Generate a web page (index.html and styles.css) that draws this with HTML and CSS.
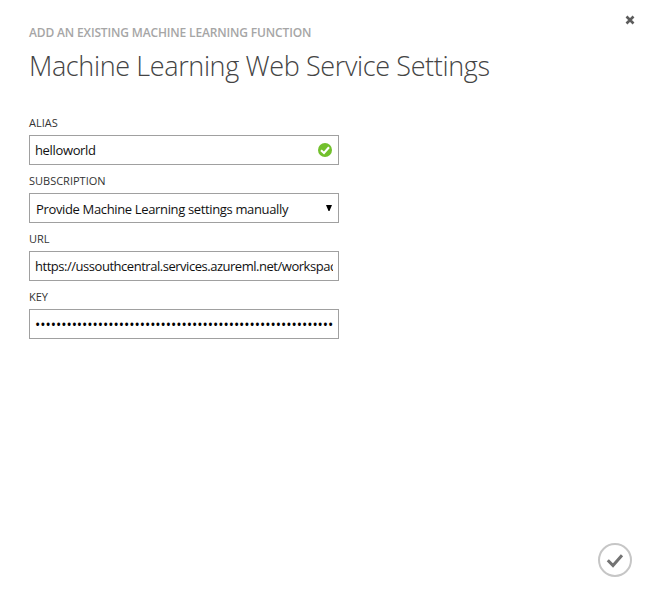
FILE: index.html
```html
<!DOCTYPE html>
<html lang="en">
<head>
<meta charset="utf-8">
<title>Machine Learning Web Service Settings</title>
<link rel="stylesheet" href="styles.css">
</head>
<body>
<main class="dialog">
  <header class="header">
    <div>
      <p class="eyebrow">ADD AN EXISTING MACHINE LEARNING FUNCTION</p>
      <h1 class="title">Machine Learning Web Service Settings</h1>
    </div>
    <button class="close" aria-label="Close">
      <svg width="10" height="10" viewBox="0 0 10 10"><path d="M1.5 1.5 8.5 8.5M8.5 1.5 1.5 8.5" fill="none" stroke="#5c5c5c" stroke-width="2.6"/></svg>
    </button>
  </header>
  <form class="form">
    <label class="label" for="alias">ALIAS</label>
    <div class="field">
      <input class="input alias" id="alias" type="text" value="helloworld">
      <svg class="valid" width="14" height="14" viewBox="0 0 14 14"><circle cx="7" cy="7" r="7" fill="#72c02c"/><path d="M3 7.2 6 10 11 4.3" fill="none" stroke="#fff" stroke-width="2.1"/></svg>
    </div>
    <label class="label" for="subscription">SUBSCRIPTION</label>
    <div class="field select" id="subscription">
      <span class="choice">Provide Machine Learning settings manually</span>
      <svg class="arrow" width="6" height="6" viewBox="0 0 6 6"><path d="M0 0H6L3.5 6H2.5Z" fill="#000"/></svg>
    </div>
    <label class="label" for="url">URL</label>
    <div class="field">
      <input class="input url" id="url" type="text" value="https://ussouthcentral.services.azureml.net/workspaces">
    </div>
    <label class="label" for="key">KEY</label>
    <div class="field">
      <div class="input key" id="key">•••••••••••••••••••••••••••••••••••••••••••••••••••••••••</div>
    </div>
  </form>
  <footer class="footer">
    <button class="confirm" aria-label="Confirm">
      <svg width="34" height="34" viewBox="0 0 34 34"><circle cx="17" cy="17" r="16" fill="#fff" stroke="#c6c6c6" stroke-width="2"/><path d="M9.8 17.2 15 22.5 24 12.2" fill="none" stroke="#737373" stroke-width="3"/></svg>
    </button>
  </footer>
</main>
</body>
</html>
```
FILE: styles.css
```css
* { box-sizing: border-box; }
body {
  margin: 0;
  background: #fff;
  font-family: "Open Sans", "Noto Sans", sans-serif;
}
.dialog {
  display: flex;
  flex-direction: column;
  height: 597px;
  padding: 15px 14px 20px 29px;
}
.header {
  display: flex;
  justify-content: space-between;
  align-items: flex-start;
  height: 100px;
}
.eyebrow {
  margin: 10px 0 0;
  font-size: 12px;
  line-height: 16px;
  font-weight: 600;
  letter-spacing: -0.15px;
  color: #a6a6a6;
}
.title {
  margin: 7px 0 0;
  font-size: 27px;
  line-height: 36px;
  font-weight: 300;
  letter-spacing: -0.37px;
  color: #444;
  white-space: nowrap;
}
.close, .confirm {
  display: flex;
  padding: 0;
  border: 0;
  background: none;
}
.form { width: 310px; }
.label {
  display: block;
  height: 20px;
  font-size: 11px;
  line-height: 16px;
  color: #333;
}
.field {
  display: flex;
  align-items: center;
  height: 30px;
  margin-bottom: 8px;
  padding: 0 5px;
  border: 1px solid #a0a0a0;
  font-size: 13px;
}
.input {
  flex: 1;
  min-width: 0;
  height: 28px;
  padding: 0;
  border: 0;
  outline: 0;
  background: none;
  font: inherit;
  line-height: 28px;
  color: #111;
  letter-spacing: -0.35px;
}
.url { letter-spacing: -0.47px; }
.valid { margin-right: 1px; }
.select { justify-content: space-between; padding: 2px 6px 0; }
.choice { color: #111; letter-spacing: -0.35px; white-space: nowrap; }
.arrow { margin-top: -3px; }
.key {
  overflow: hidden;
  white-space: nowrap;
  color: #000;
  font-size: 14px;
  line-height: 30px;
  letter-spacing: -0.03px;
}
.footer {
  display: flex;
  justify-content: flex-end;
  margin-top: auto;
  padding-right: 3px;
}
```
